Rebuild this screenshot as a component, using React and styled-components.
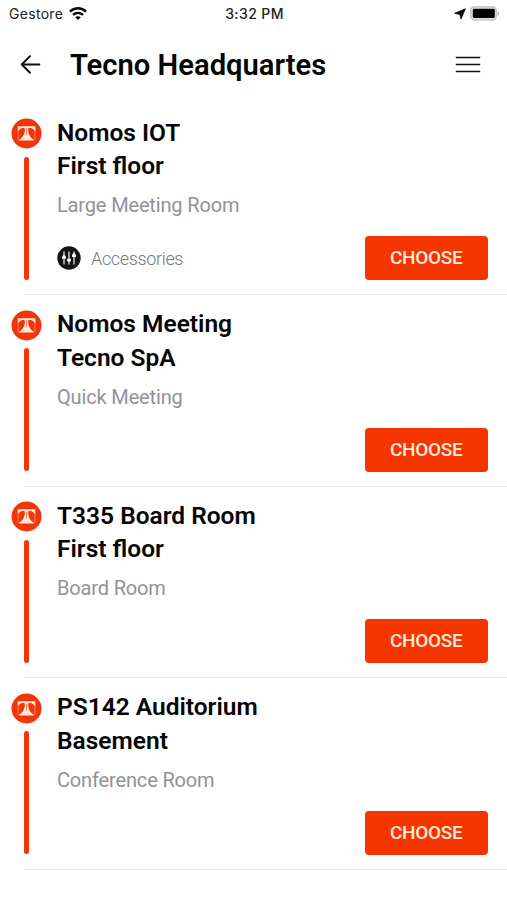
import React from "react";
import styled, { createGlobalStyle } from "styled-components";

const GlobalStyle = createGlobalStyle`
  * { box-sizing: border-box; }
  body { margin: 0; background: #fefefe; }
  svg { display: block; flex: none; }
`;

const Screen = styled.main`
  width: 507px;
  height: 900px;
  overflow: hidden;
  background: #fefefe;
  color: #050505;
  font-family: Roboto, sans-serif;
`;

const StatusBar = styled.div`
  display: grid;
  grid-template-columns: 1fr auto 1fr;
  align-items: center;
  height: 27px;
  padding: 0 7px 0 9px;
  font-family: Inter, sans-serif;
  font-size: 14px;
  line-height: 27px;
  color: #222;
`;

const StatusGroup = styled.div`
  display: flex;
  align-items: center;
  justify-content: ${(p) => (p.$end ? "flex-end" : "flex-start")};
  gap: ${(p) => (p.$end ? 4 : 6)}px;
`;

const Carrier = styled.span`
  letter-spacing: 0.3px;
`;

const Clock = styled.span`
  font-weight: 550;
  font-size: 14px;
  letter-spacing: 0.4px;
`;

const Header = styled.header`
  display: flex;
  align-items: center;
  height: 76px;
  padding: 0 26px 0 20px;
`;

const Title = styled.h1`
  flex: 1;
  margin: 0 0 0 28px;
  font-size: 29.2px;
  font-weight: 600;
  line-height: 40px;
  white-space: nowrap;
`;

const IconButton = styled.button`
  padding: 0;
  border: 0;
  background: none;
  color: #111;
`;

const List = styled.ul`
  margin: 0;
  padding: 0;
  list-style: none;
`;

const Room = styled.li`
  display: grid;
  grid-template-columns: 31px 1fr;
  column-gap: 15px;
  height: 191.5px;
  padding: 0 19.5px 0 11px;
  background: linear-gradient(#e9e9eb, #e9e9eb) 24px 100% / 483px 1px no-repeat;

  &:first-child {
    height: 192px;
  }

  &:not(:first-child) > * {
    margin-top: -0.5px;
  }
`;

const Marker = styled.div`
  display: flex;
  flex-direction: column;
  align-items: center;
  padding-top: 15.4px;
`;

const Rail = styled.span`
  width: 5px;
  height: 123px;
  margin-top: 7.6px;
  border-radius: 3px;
  background: #f33607;
`;

const Details = styled.div`
  display: flex;
  flex-direction: column;
  padding-top: 12.7px;
`;

const Name = styled.h2`
  margin: 0;
  font-size: 24.5px;
  font-weight: 600;
  line-height: 33.7px;
  white-space: nowrap;
`;

const Kind = styled.p`
  margin: 8.3px 0 0;
  font-size: 20px;
  line-height: 28px;
  color: #909398;
  letter-spacing: -0.15px;
`;

const Footer = styled.div`
  display: flex;
  align-items: center;
  height: 44px;
  margin-top: 17px;
`;

const Accessories = styled.div`
  display: flex;
  align-items: center;
  gap: 10px;
  font-size: 18px;
  font-weight: 300;
  letter-spacing: -0.35px;
  color: #75787c;
`;

const Choose = styled.button`
  width: 122.5px;
  height: 44px;
  margin-left: auto;
  padding: 0;
  border: 0;
  border-radius: 4px;
  background: #f53500;
  color: #ffe9dc;
  font: 500 19px/44px Roboto, sans-serif;
  letter-spacing: -0.3px;
`;

const Wifi = () => (
  <svg width="18" height="14" viewBox="0 0 18 14" fill="none" stroke="#080808" strokeWidth="2.5">
    <path d="M1 4.6C5.6.2 12.4.2 17 4.6M4 7.9c2.9-2.7 7.1-2.7 10 0" />
    <path d="M6.2 10.2c1.6-1.4 4-1.4 5.6 0L9 13z" fill="#080808" stroke="none" />
  </svg>
);

const Location = () => (
  <svg width="12" height="12" viewBox="0 0 12 12">
    <path d="M11.4.8 7 11 5.9 6.5.6 5.3z" fill="#080808" stroke="#080808" strokeWidth=".8" strokeLinejoin="round" />
  </svg>
);

const Battery = () => (
  <svg width="30" height="15" viewBox="0 0 30 15">
    <rect x=".8" y=".8" width="25.4" height="13" rx="3.6" fill="#e4e4e4" stroke="#bdbdbd" strokeWidth="1.3" />
    <rect x="2.8" y="2.7" width="22" height="9.2" rx="1.3" fill="#000" />
    <path d="M27.7 5v5c1.8-.7 1.8-4.3 0-5z" fill="#b7b7b7" />
  </svg>
);

const Back = () => (
  <svg width="22" height="22" viewBox="0 0 22 22" fill="none" stroke="currentColor" strokeWidth="2" strokeLinecap="round" strokeLinejoin="round">
    <path d="M19.3 10.5H2M10 2.1 1.8 10.5l8.2 8.2" />
  </svg>
);

const Menu = () => (
  <svg width="26" height="18" viewBox="0 0 26 18" stroke="currentColor" strokeWidth="1.7">
    <path d="M.8 1.5h24.4M.8 8.5h24.4M.8 15.5h24.4" />
  </svg>
);

const Logo = () => (
  <svg width="31" height="31" viewBox="0 0 31 31">
    <circle cx="15.5" cy="15.5" r="15" fill="#f33607" />
    <path d="M6.7 8.3h17.6v6.2c-.9-2.2-2.4-3.9-4.7-4.4-1.3-.3-2.5 0-2.5.9 0 4 1.3 7 3.2 8.8 1 .9 2.1 1.6 3.3 2.6H7.4c1.2-1 2.3-1.7 3.3-2.6 1.9-1.8 3.2-4.8 3.2-8.8 0-.9-1.2-1.2-2.5-.9-2.3.5-3.8 2.2-4.7 4.4z" fill="#ffe9df" />
    <path d="M15.5 10.3v7.2" stroke="#f78b66" strokeWidth="1" />
    <path d="M7.1 14v8M23.9 14v8" stroke="#f7a182" strokeWidth=".7" />
  </svg>
);

const Sliders = () => (
  <svg width="24" height="24" viewBox="0 0 24 24">
    <circle cx="12" cy="12" r="11.7" fill="#151517" />
    <path d="M7 5.5v13M12 5.5v9M12 16.7v1.8M17 5.5v13" stroke="#e3e3e3" strokeWidth="1.3" />
    <path d="m7 8.4 2 2.3v2H5v-2zM12 17l2-2.2v-2h-4v2zM17 6.5l2 2.4v2h-4v-2z" fill="#f3f3f3" />
  </svg>
);

const rooms = [
  { name: "Nomos IOT", place: "First floor", kind: "Large Meeting Room", accessories: true },
  { name: "Nomos Meeting", place: "Tecno SpA", kind: "Quick Meeting" },
  { name: "T335 Board Room", place: "First floor", kind: "Board Room" },
  { name: "PS142 Auditorium", place: "Basement", kind: "Conference Room" },
];

export default function App() {
  return (
    <Screen>
      <GlobalStyle />
      <StatusBar>
        <StatusGroup><Carrier>Gestore</Carrier><Wifi /></StatusGroup>
        <Clock>3:32 PM</Clock>
        <StatusGroup $end><Location /><Battery /></StatusGroup>
      </StatusBar>
      <Header>
        <IconButton aria-label="Back"><Back /></IconButton>
        <Title>Tecno Headquartes</Title>
        <IconButton aria-label="Menu"><Menu /></IconButton>
      </Header>
      <List>
        {rooms.map((room) => (
          <Room key={room.name}>
            <Marker><Logo /><Rail /></Marker>
            <Details>
              <Name>{room.name}</Name>
              <Name>{room.place}</Name>
              <Kind>{room.kind}</Kind>
              <Footer>
                {room.accessories && <Accessories><Sliders />Accessories</Accessories>}
                <Choose>CHOOSE</Choose>
              </Footer>
            </Details>
          </Room>
        ))}
      </List>
    </Screen>
  );
}
